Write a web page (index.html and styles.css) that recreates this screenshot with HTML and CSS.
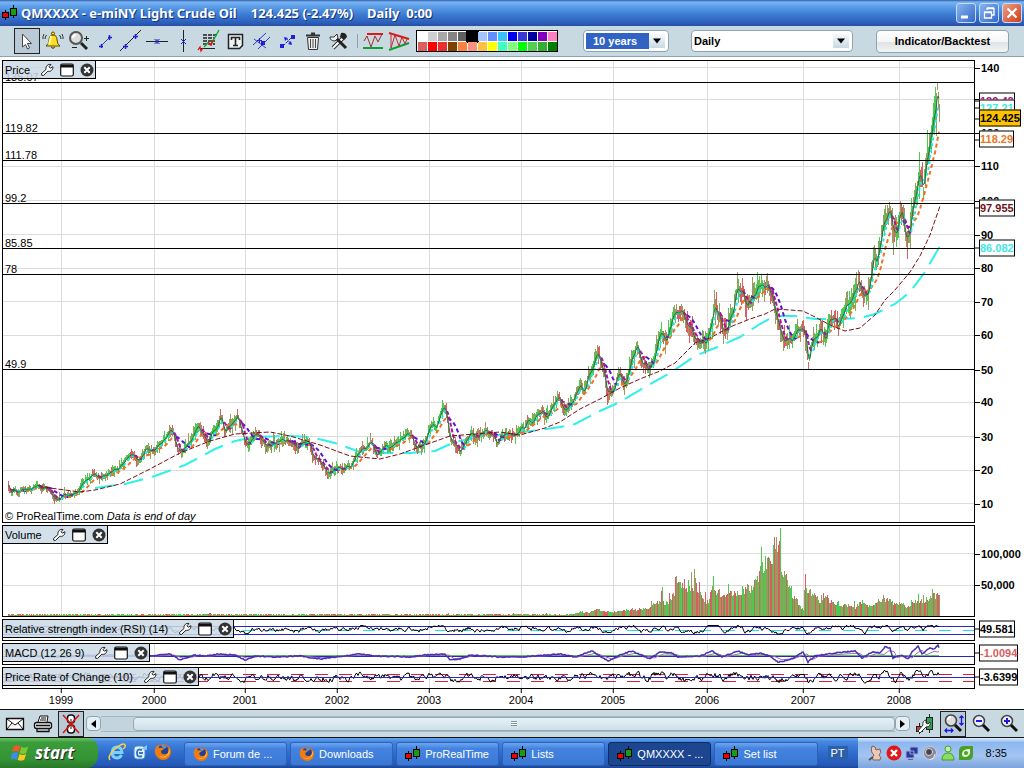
FILE: index.html
```html
<!DOCTYPE html>
<html lang="en">
<head>
<meta charset="utf-8">
<title>QMXXXX - e-miNY Light Crude Oil</title>
<link rel="stylesheet" href="styles.css">
</head>
<body>
<svg class="defs" aria-hidden="true">
  <symbol id="candles" viewBox="0 0 16 16"><path d="M3.500 5v10M11.500 0v13" stroke="#000"/><rect x=".5" y="7.500" width="6" height="5" fill="#f00000" stroke="#000"/><rect x="8.500" y="3.500" width="6" height="7" fill="#10a010" stroke="#000"/></symbol>
  <symbol id="wrench" viewBox="0 0 14 14"><path d="M1.500 10.500 6 6.500C5.500 3 8 .8 11 1.500L9 3.800l1.400 1.400 2.500-1.500C13.200 7 10.500 9 7.800 8.200L3.500 12.500Q1 13 1.500 10.500Z" fill="#fff" stroke="#222"/></symbol>
  <symbol id="panel" viewBox="0 0 14 14"><rect x=".7" y="1" width="12.600" height="12" rx="1.500" fill="#fff" stroke="#111" stroke-width="1.200"/><path d="M1 1.500h12v3H1z" fill="#111"/></symbol>
  <symbol id="close" viewBox="0 0 14 14"><circle cx="7" cy="7" r="6.500" fill="#333"/><path d="m4.300 4.300 5.400 5.400m0-5.400L4.300 9.700" stroke="#fff" stroke-width="2"/></symbol>
  <symbol id="firefox" viewBox="0 0 18 18"><circle cx="9" cy="9" r="8" fill="#e66a10"/><circle cx="9" cy="7.500" r="5.500" fill="#24418f"/><path d="M7 2q4-1 6 2l-3 2-2-2Z" fill="#5c92d8"/><path d="M1 6q1-3 3-4l1 3q3-1 5 1L7 8q0 4 5 3 4-1 3-7 3 5 0 10-5 5-11 0Q0 11 1 6Z" fill="#ee7c16"/><path d="M15 5q2 5-2 8-4 3-8 0 5 2 8-1 2-3 2-7Z" fill="#ffc540"/></symbol>
</svg>

<header class="titlebar">
  <svg class="i16"><use href="#candles"/></svg>
  <h1><span>QMXXXX - e-miNY Light Crude Oil</span><span>124.425 (-2.47%)</span><span>Daily&nbsp; 0:00</span></h1>
  <div class="window-buttons">
    <button aria-label="Minimize"><svg viewBox="0 0 18 18"><path d="M4 13h7" stroke="#fff" stroke-width="3"/></svg></button>
    <button aria-label="Restore"><svg viewBox="0 0 18 18"><path d="M7 6V4.500h7V11h-2M7 4h7M4.500 8h7v6h-7zM4 8.500h8" fill="none" stroke="#fff" stroke-width="1.300"/></svg></button>
    <button class="quit" aria-label="Close"><svg viewBox="0 0 18 18"><path d="m4.500 4.500 9 9m0-9-9 9" stroke="#fff" stroke-width="2.300"/></svg></button>
  </div>
</header>

<nav class="toolbar" aria-label="Drawing tools">
  <div class="tools">
    <button class="tool pressed" aria-label="Pointer"><svg viewBox="0 0 24 24"><path d="M7.500 5v13l3-2.500 2 4.500 2-1-2-4.500h4Z" fill="#fff" stroke="#444"/></svg></button>
    <button class="tool" aria-label="Alerts"><svg viewBox="0 0 24 24"><path d="M5 17q3-2 3-6 0-5 4-5t4 5q0 4 3 6Z" fill="#ffdf20" stroke="#5a4a00"/><path d="M10 7q-1 5-2 8" stroke="#fff9b0" stroke-width="2" fill="none"/><circle cx="12" cy="4.500" r="1.500" fill="#ffdf20" stroke="#5a4a00"/><path d="M10 18q2 3 4 0" fill="#e8a000" stroke="#5a4a00"/><path d="M5.500 6Q4 8 4 10M3 5Q1.500 8 2 10M18.500 6q1.500 2 1.500 4m1-5q1.500 3 1 5" fill="none" stroke="#333"/></svg></button>
    <button class="tool" aria-label="Zoom"><svg viewBox="0 0 24 24"><circle cx="9" cy="9" r="6" fill="#ddd" stroke="#555" stroke-width="2"/><path d="M6 9q0-3 3-3" fill="none" stroke="#fff" stroke-width="2"/><path d="m14 14 6 6" stroke="#222" stroke-width="3"/><path d="M17 9.500h5M19.500 7v5M5 18.500h5" stroke="#222"/></svg></button>
    <button class="tool" aria-label="Segment"><svg viewBox="0 0 24 24"><path d="m8 17 9-9" stroke="#447"/><path d="M6 17.500h4M8.500 15v4M15 8.500h4M16.500 6v5" stroke="#2020d8" stroke-width="1.500"/></svg></button>
    <button class="tool" aria-label="Line"><svg viewBox="0 0 24 24"><path d="M1 22 22 1" stroke="#222"/><path d="M4 17.500h5M6.500 15v5M14 7.500h5M16.500 5v5" stroke="#2020d8" stroke-width="1.500"/></svg></button>
    <button class="tool" aria-label="Horizontal line"><svg viewBox="0 0 24 24"><path d="M1 12.500h22" stroke="#222"/><path d="m9.500 10 5 5m0-5-5 5M12 10v5" stroke="#2020d8"/></svg></button>
    <button class="tool" aria-label="Vertical line"><svg viewBox="0 0 24 24"><path d="M12.500 1v22" stroke="#222"/><path d="m10 10 5 5m0-5-5 5" stroke="#2020d8"/></svg></button>
    <button class="tool" aria-label="Fibonacci"><svg viewBox="0 0 24 24"><path d="M6 6h14M6 9h12M6 12h12M6 15h12" stroke="#222" stroke-width="1.300" stroke-dasharray="4 1"/><path d="M4 19.500h14" stroke="#222"/><path d="m7 18 4-4 3 2 3-6 5-9" fill="none" stroke="#10b030" stroke-width="1.500"/><path d="m11 13 3 3 2-5M1 21l2-3 1 4 2-3" fill="none" stroke="#e01010" stroke-width="1.300"/></svg></button>
    <button class="tool" aria-label="Text"><svg viewBox="0 0 24 24"><path d="M5.500 5.500h14v11l-3 3h-11Z" fill="#eef2f4" stroke="#222" stroke-width="1.500"/><path d="M8.500 11V8.500h8V11M12.500 8.500v8M10 16.500h5" fill="none" stroke="#222" stroke-width="1.600"/></svg></button>
    <button class="tool" aria-label="Channel"><svg viewBox="0 0 24 24"><path d="M4 16 17 4M9 20 21 8M5 10l12 9" stroke="#3838c8"/><path d="M8 11.500h5M10.500 9v5" stroke="#2020d8"/><path d="M12 12h4v4h-4z" fill="#2020d8"/></svg></button>
    <button class="tool" aria-label="Move"><svg viewBox="0 0 24 24"><path d="m8 17 9-9M11 9l5 6" stroke="#2020d8" stroke-dasharray="3 1"/><path d="M5 15h4v4H5zM16 6h4v4h-4zM9 8l4 1-3 3ZM17 16l-4-1 3-3Z" fill="#2020d8"/></svg></button>
    <button class="tool" aria-label="Delete"><svg viewBox="0 0 24 24"><path d="M6.500 8.500 7.500 20.500h9l1-12Z" fill="#eee" stroke="#333"/><path d="M5 6.500h14M10 4.500h4" stroke="#333" stroke-width="1.800"/><path d="M9.500 10v9M12 10v9M14.500 10v9" stroke="#444"/></svg></button>
    <button class="tool" aria-label="Settings"><svg viewBox="0 0 24 24"><path d="m6 19 11-11" stroke="#333" stroke-width="4"/><path d="m6 19 11-11" stroke="#fff" stroke-width="2"/><path d="M14 4q5-1 6 4l-3 3-4-3Z" fill="#222"/><path d="m10 10 9 9" stroke="#222" stroke-width="3"/><path d="M3 8q0 4 5 4l3-3-1-4-3 3Z" fill="#eee" stroke="#333"/></svg></button>
  </div>
  <div class="tools patterns">
    <button class="tool" aria-label="Range pattern"><svg viewBox="0 0 24 24"><path d="M6 5h16" stroke="#e01818" stroke-width="2"/><path d="M2 19h20" stroke="#10a030" stroke-width="2"/><path d="m3 12 3-5 4 11 4-11 3 6 4-8" fill="none" stroke="#a03030"/></svg></button>
    <button class="tool" aria-label="Triangle pattern"><svg viewBox="0 0 24 24"><path d="m2 4 20 6" stroke="#e01818" stroke-width="2"/><path d="m2 21 20-7" stroke="#10a030" stroke-width="2"/><path d="M4 5v14l4-13 4 11 3-9 3 7 2-5" fill="none" stroke="#c03030"/></svg></button>
  </div>
  <div class="palette" id="palette"></div>
  <label class="picker period"><select aria-label="Period"><option>10 years</option></select><svg viewBox="0 0 8 5"><path d="M0 0h8L4 5Z"/></svg></label>
  <label class="picker interval"><select aria-label="Interval"><option>Daily</option></select><svg viewBox="0 0 8 5"><path d="M0 0h8L4 5Z"/></svg></label>
  <button class="backtest">Indicator/Backtest</button>
</nav>

<main class="charts">
  <section class="row price">
    <div class="plot"><svg class="graph" id="g-price" viewBox="3 61 971 461" preserveAspectRatio="none"></svg>
      <div class="levels" id="levels"></div>
      <div class="head"><h2>Price</h2><button aria-label="Configure price"><svg><use href="#wrench"/></svg></button><button aria-label="Price window"><svg><use href="#panel"/></svg></button><button aria-label="Close price"><svg><use href="#close"/></svg></button></div>
      <p class="credit">© ProRealTime.com <em>Data is end of day</em></p>
    </div>
    <div class="axis" id="a-price"></div>
  </section>
  <section class="row volume">
    <div class="plot"><svg class="graph" id="g-volume" viewBox="3 526 971 90" preserveAspectRatio="none"></svg>
      <div class="head"><h2>Volume</h2><button aria-label="Configure volume"><svg><use href="#wrench"/></svg></button><button aria-label="Volume window"><svg><use href="#panel"/></svg></button><button aria-label="Close volume"><svg><use href="#close"/></svg></button></div>
    </div>
    <div class="axis" id="a-volume"></div>
  </section>
  <section class="row thin">
    <div class="plot"><svg class="graph" id="g-rsi" viewBox="3 620 971 20" preserveAspectRatio="none"></svg>
      <div class="head"><h2>Relative strength index (RSI) (14)</h2><button aria-label="Configure RSI"><svg><use href="#wrench"/></svg></button><button aria-label="RSI window"><svg><use href="#panel"/></svg></button><button aria-label="Close RSI"><svg><use href="#close"/></svg></button></div>
    </div>
    <div class="axis" id="a-rsi"></div>
  </section>
  <section class="row thin">
    <div class="plot"><svg class="graph" id="g-macd" viewBox="3 644 971 20" preserveAspectRatio="none"></svg>
      <div class="head"><h2>MACD (12 26 9)</h2><button aria-label="Configure MACD"><svg><use href="#wrench"/></svg></button><button aria-label="MACD window"><svg><use href="#panel"/></svg></button><button aria-label="Close MACD"><svg><use href="#close"/></svg></button></div>
    </div>
    <div class="axis" id="a-macd"></div>
  </section>
  <section class="row thin">
    <div class="plot"><svg class="graph" id="g-roc" viewBox="3 668 971 20" preserveAspectRatio="none"></svg>
      <div class="head"><h2>Price Rate of Change (10)</h2><button aria-label="Configure rate of change"><svg><use href="#wrench"/></svg></button><button aria-label="Rate of change window"><svg><use href="#panel"/></svg></button><button aria-label="Close rate of change"><svg><use href="#close"/></svg></button></div>
    </div>
    <div class="axis" id="a-roc"></div>
  </section>
  <div class="years" id="years"></div>
</main>

<div class="scrollrow">
  <button class="tool" aria-label="Mail"><svg viewBox="0 0 24 24"><path d="M3.500 6.500h17v11h-17z" fill="#fff" stroke="#111" stroke-width="1.300"/><path d="m4 7 8 6 8-6M4 17l5-6M20 17l-5-6" fill="none" stroke="#111"/></svg></button>
  <button class="tool" aria-label="Print"><svg viewBox="0 0 24 24"><path d="m7 10 2-6h8l-1 6" fill="#fff" stroke="#111"/><path d="M10 6h5M9 8h6" stroke="#111"/><rect x="3.500" y="10.500" width="17" height="6" rx="2" fill="#e8e8e8" stroke="#111" stroke-width="1.300"/><path d="M5 13.500h14M6 16v3.500h12V16" fill="none" stroke="#111" stroke-width="1.300"/></svg></button>
  <button class="tool pressed" aria-label="Unlink"><svg viewBox="0 0 24 24"><rect x="8.500" y="3" width="7" height="8" rx="3" fill="#fff" stroke="#111" stroke-width="1.500"/><rect x="8.500" y="13" width="7" height="8" rx="3" fill="#fff" stroke="#111" stroke-width="1.500"/><path d="M12 7v10" stroke="#111"/><path d="m4 3 16 18M20 3 4 21" stroke="#e01010" stroke-width="1.500"/></svg></button>
  <div class="scrollbar">
    <button aria-label="Scroll left"><svg viewBox="0 0 5 8"><path d="M5 0v8L0 4Z"/></svg></button>
    <div class="track"><div class="thumb"><i></i></div></div>
    <button aria-label="Scroll right"><svg viewBox="0 0 5 8"><path d="M0 0v8l5-4Z"/></svg></button>
  </div>
  <button class="tool" aria-label="Chart style"><svg viewBox="0 0 24 24"><path d="M6.500 11v11M16.500 2v19" stroke="#222"/><rect x="3.500" y="14.500" width="6" height="5" fill="#d04040" stroke="#222"/><rect x="13.500" y="5.500" width="6" height="12" fill="#30a050" stroke="#222"/><path d="m5 19 5-6q-1-4 3-5v3l2 1 2-2q1 5-4 5l-6 6Z" fill="#fff" stroke="#333"/></svg></button>
  <button class="tool pressed" aria-label="Fit"><svg viewBox="0 0 24 24"><circle cx="10" cy="8.500" r="5.500" fill="#ddd" stroke="#444" stroke-width="1.600"/><path d="M7 8q0-3 3-3" fill="none" stroke="#fff" stroke-width="2"/><path d="m14 13 6 6" stroke="#111" stroke-width="3"/><path d="M20.500 4v9M18.500 6l2-2 2 2M18.500 11l2 2 2-2M4 18.500h8M6 16.500l-2 2 2 2M10 16.500l2 2-2 2" fill="none" stroke="#1818e0" stroke-width="1.300"/></svg></button>
  <button class="tool" aria-label="Zoom out"><svg viewBox="0 0 24 24"><circle cx="10" cy="9" r="5.500" fill="#eef" stroke="#444" stroke-width="1.500"/><path d="m14 13 6 6" stroke="#111" stroke-width="3"/><path d="M7 9h6" stroke="#1818e0" stroke-width="2"/></svg></button>
  <button class="tool" aria-label="Zoom in"><svg viewBox="0 0 24 24"><circle cx="10" cy="9" r="5.500" fill="#eef" stroke="#444" stroke-width="1.500"/><path d="m14 13 6 6" stroke="#111" stroke-width="3"/><path d="M7 9h6M10 6v6" stroke="#1818e0" stroke-width="2"/></svg></button>
</div>

<footer class="taskbar">
  <button class="start"><svg viewBox="0 0 20 18"><path d="M3 2q4-2 7 0L8 8Q5 6 1 8Z" fill="#f05a28"/><path d="M11 2.500q3 2 7 0L16 9q-4 2-7 0Z" fill="#7cc832"/><path d="M1 9.500q4-2 7 0L6 16q-3-2-7 0Z" fill="#3c8cf0"/><path d="M9 10q3 2 7 0l-2 6q-4 2-7 0Z" fill="#fcc820"/></svg>start</button>
  <div class="quick">
    <button aria-label="Internet Explorer"><svg viewBox="0 0 18 18"><path d="M13.500 12q-1.500 3-4.500 3-4.500 0-5-5.500Q4.500 4 9 4t5 5.500H5" fill="none" stroke="#7cd0ff" stroke-width="2.800"/><path d="M2 17Q-1 13 7 6t10-4q1 2-2 4" fill="none" stroke="#ffce40" stroke-width="1.500"/></svg></button>
    <button aria-label="Outlook"><svg viewBox="0 0 18 18"><rect x="3" y="3" width="11" height="13" rx="3" fill="#e8f4ff" stroke="#4888c8"/><path d="M11 7q-5-2-5 3t5 3M8 10h4" fill="none" stroke="#2878d0" stroke-width="2"/><path d="m10 6 6-4v5Z" fill="#80c8f8"/></svg></button>
    <button aria-label="Firefox"><svg><use href="#firefox"/></svg></button>
  </div>
  <div class="tasks">
    <button><svg><use href="#firefox"/></svg>Forum de ...</button>
    <button><svg><use href="#firefox"/></svg>Downloads</button>
    <button><svg><use href="#candles"/></svg>ProRealTime</button>
    <button><svg><use href="#candles"/></svg>Lists</button>
    <button class="active"><svg><use href="#candles"/></svg>QMXXXX - ...</button>
    <button><svg><use href="#candles"/></svg>Set list</button>
  </div>
  <span class="lang">PT</span>
  <div class="tray">
    <svg viewBox="0 0 16 16"><path d="M4 1q4 0 4 4l4-1q2 4-1 6 3 2 1 5H5q-2-3 1-5-4-3-2-9Z" fill="#e8c8b8" stroke="#806050"/><path d="m1 15 4-3" stroke="#555" stroke-width="2"/></svg>
    <svg viewBox="0 0 16 16"><circle cx="8" cy="8" r="7.500" fill="#e01818"/><path d="m5 5 6 6m0-6-6 6" stroke="#fff" stroke-width="2.400"/></svg>
    <svg viewBox="0 0 16 16"><path d="M6 2h8v7H6zM2 6h8v7H2z" fill="#2838a0" stroke="#99a8d0"/><path d="M4 14.500h5" stroke="#667"/></svg>
    <svg viewBox="0 0 16 16"><circle cx="8" cy="8" r="6.500" fill="#889" stroke="#ccd"/><circle cx="7" cy="7" r="3.500" fill="#445" stroke="#ddd"/><path d="M13 9q0 4-5 6" stroke="#eee" fill="none"/></svg>
    <svg viewBox="0 0 16 16"><circle cx="8" cy="4" r="3" fill="#c8f0a0" stroke="#40a030"/><path d="M2 15q0-7 6-7t6 7Z" fill="#8cdc60" stroke="#40a030"/></svg>
    <svg viewBox="0 0 16 16"><path d="M6 1h9v9q0 5-5 5H1V6q0-5 5-5Z" fill="#48a028"/><path d="M12 4q1 8-5 8-3 0-3-3 0-5 8-5Z" fill="#e8f8d0"/><circle cx="8" cy="8" r="2" fill="#48a028"/></svg>
    <time>8:35</time>
  </div>
</footer>
<script src="chart.js"></script>
</body>
</html>
```

FILE: styles.css
```css
* { box-sizing: border-box; }
body {
  margin: 0; min-height: 100vh; display: flex; flex-direction: column;
  font: 11px/14px "Liberation Sans", Arial, sans-serif; color: #000; background: #fff;
}
button, select { font: inherit; color: inherit; padding: 0; margin: 0; border: 0; background: none; }
h1, h2, p { margin: 0; font: inherit; }
svg { display: block; }
.defs { position: absolute; width: 0; height: 0; }
.i16 { width: 16px; height: 16px; }

.titlebar {
  display: flex; align-items: center; height: 26px; padding: 0 2px; gap: 3px; color: #fff;
  background: linear-gradient(#3060b0 0, #7ab4f2 8%, #5c9ee8 25%, #3c7cd2 55%, #2c5cb8 90%, #2450a0);
}
.titlebar h1 {
  flex: 1; display: flex; gap: 14px; white-space: nowrap;
  font: bold 13px/18px "Noto Sans", "Open Sans", sans-serif; text-shadow: 1px 1px #14357c;
}
.window-buttons { display: flex; gap: 3px; }
.window-buttons button {
  width: 20px; height: 20px; border: 1px solid #c4dcfa; border-radius: 3px;
  background: linear-gradient(135deg, #88b4f0, #3468c8);
}
.window-buttons .quit { background: linear-gradient(135deg, #f0a088, #cc3c18); }

.toolbar {
  display: flex; align-items: center; height: 31px; padding-left: 14px;
  background: #c8d9e2; border-bottom: 1px solid #8fa3ad;
}
.tools { display: flex; }
.tool { display: grid; place-items: center; width: 26px; height: 26px; flex: none; }
.tool svg { width: 24px; height: 24px; }
.tool.pressed { border: 1px solid #222; background: #b9cad6; }
.patterns { margin-left: 5px; padding-left: 3px; background: linear-gradient(#8fa3ad, #8fa3ad) 0 6px / 1px 14px no-repeat; }
.palette {
  display: grid; grid-template-columns: repeat(14, 10px); grid-auto-rows: 10px;
  margin-left: 4px; border: 1px solid #000; background: #fff;
}
.palette button { width: 9px; height: 9px; margin: 1px 0 0 1px; }
.palette button.chosen { width: 13px; height: 12px; margin: 0 0 0 -1px; }
.picker {
  position: relative; display: block; height: 22px; padding: 2px; background: #fff;
  border: 1px solid #8da4b4; border-radius: 4px;
}
.picker select {
  display: block; width: 100%; height: 16px; font-weight: bold; appearance: none; outline: 0; padding-left: 7px;
}
.picker svg {
  position: absolute; right: 3px; top: 3px; width: 16px; height: 14px; padding: 4px;
  background: linear-gradient(#f6fafc, #c8d9e2); pointer-events: none;
}
.period { width: 86px; margin-left: 25px; }
.period select { color: #fff; background: linear-gradient(#3163c5, #3163c5) 0 0 / 63px 100% no-repeat; }
.period option { color: #000; }
.interval { flex: 0 0 162px; margin-left: 22px; }
.interval select { padding-left: 0; }
.backtest {
  width: 133px; height: 23px; margin: 0 15px 0 auto; font-weight: bold;
  border: 1px solid #8da4b4; border-radius: 4px;
  background: linear-gradient(#fff, #f6f6f6 50%, #dfe3e5 55%, #f4f4f4);
}

.charts { flex: 1; display: flex; flex-direction: column; gap: 2px; padding: 3px 0 0 2px; }
.row { display: grid; grid-template-columns: 1fr 49px; }
.price { flex: 463 0 0; min-height: 300px; }
.volume { flex: 92 0 0; min-height: 60px; }
.thin { height: 22px; }
.plot { position: relative; border: 1px solid #000; min-width: 0; }
.graph { position: absolute; width: 100%; height: 100%; }
.graph * { vector-effect: non-scaling-stroke; fill: none; }
.grid { stroke: #dcdcdc; shape-rendering: crispEdges; }
.level { stroke: #000; shape-rendering: crispEdges; }
.bar { shape-rendering: crispEdges; }
.green { stroke: #4fc94f; }
.red { stroke: #d66060; }
.olive { stroke: #9c9860; }
.close-line { stroke: #187848; }
.fast-up { stroke: #20e8e0; stroke-width: 2; stroke-dasharray: 3 3; }
.fast-down { stroke: #b0109c; stroke-width: 2; stroke-dasharray: 4 2; }
.mid-up { stroke: #ee7020; stroke-width: 2; stroke-dasharray: 4 3; }
.mid-down { stroke: #5a10d0; stroke-width: 2; stroke-dasharray: 4 3; }
.slow { stroke: #781018; stroke-width: 1; stroke-dasharray: 5 2; }
.long { stroke: #30f0ea; stroke-width: 2; stroke-dasharray: 20 9; }
.ink { stroke: #000; }
.blue { stroke: #2828c0; shape-rendering: crispEdges; }
.cyan-dash { stroke: #20e0e8; stroke-dasharray: 12 12; shape-rendering: crispEdges; }
.red-dash { stroke: #d02040; stroke-dasharray: 13 11; shape-rendering: crispEdges; }
.macd { stroke: #4a30b0; stroke-width: 1.5; }
.signal { stroke: #a868b8; }
.histogram { stroke: #60c860; }

.head {
  position: relative; display: inline-flex; align-items: center; gap: 6px; height: 18px; padding: 0 1px 0 2px;
  border: solid #000; border-width: 0 1px 1px 0; background: rgba(203, 219, 229, .85); vertical-align: top;
}
.head h2 { margin-right: 4px; white-space: nowrap; }
.head button, .head svg { width: 14px; height: 14px; }
.levels span { position: absolute; left: 2px; line-height: 10px; transform: translateY(-100%); }
.credit { position: absolute; left: 2px; bottom: -1px; }

.axis { position: relative; font-weight: bold; }
.axis span { position: absolute; left: 6px; transform: translateY(-50%); }
.axis span::before { content: ""; position: absolute; left: -6px; top: 50%; width: 5px; height: 1px; background: #000; }
.axis .tag { left: 4px; padding: 0; line-height: 15px; border: 1px solid #000; background: #fff; }
.axis .tag::before { left: -5px; width: 4px; }
.axis .last { background: #fec200; }
.c-magenta { color: #b0107c; }
.c-cyan { color: #40e8e4; }
.c-orange { color: #e87828; }
.c-maroon { color: #701018; }
.c-rose { color: #d66060; }

.years { position: relative; height: 18px; margin-right: 50px; }
.years span { position: absolute; top: 3px; transform: translateX(-50%); line-height: 12px; }
.years span::before { content: ""; position: absolute; left: 50%; top: -5px; width: 1px; height: 4px; background: #000; }

.scrollrow {
  display: flex; align-items: center; height: 29px; padding: 0 2px;
  background: #c8d9e2; border: solid #111; border-width: 1px 0; gap: 2px;
}
.scrollbar { flex: 1; display: flex; align-items: center; }
.scrollbar button {
  display: grid; place-items: center; width: 15px; height: 15px; border: 1px solid #8da4b4; border-radius: 4px;
  background: #e4eef3;
}
.scrollbar button svg { width: 5px; height: 8px; }
.track { flex: 1; height: 16px; padding-left: 32px; border: solid #a4b8c2; border-width: 1px 0; background: #c3d4de; }
.thumb {
  display: grid; place-items: center; height: 14px; border: 1px solid #94a9b5; border-radius: 4px;
  background: linear-gradient(#e6f1f6, #cddfe9);
}
.thumb i { width: 6px; height: 5px; background: repeating-linear-gradient(#8094a4 0 1px, #fff 1px 2px); }

.taskbar {
  display: flex; height: 30px; color: #fff;
  background: linear-gradient(#6aa6ee 0, #4486e0 12%, #2f6ccc 50%, #2458b8 90%, #1c4490);
}
.start {
  display: flex; align-items: center; gap: 5px; width: 98px; padding-left: 11px; color: #fff;
  font: italic bold 17px/20px "Open Sans", sans-serif; text-shadow: 1px 1px 1px #222;
  border-radius: 0 10px 12px 0; background: linear-gradient(#6cc468 0, #3c9c3c 15%, #349434 70%, #287828);
}
.start svg { width: 19px; height: 18px; }
.quick { display: flex; align-items: center; gap: 5px; padding: 0 12px 2px 10px; }
.quick svg { width: 18px; height: 18px; }
.tasks { flex: 1; display: grid; grid-template-columns: repeat(6, minmax(0, 1fr)); gap: 3px; padding: 4px 0 2px; }
.tasks button {
  display: flex; align-items: center; gap: 4px; padding-left: 8px; white-space: nowrap; overflow: hidden;
  border: 1px solid #2c62b8; border-radius: 3px; background: linear-gradient(#6ea6f0, #4484e0 25%, #3a78d4);
}
.tasks button svg { width: 16px; height: 16px; }
.tasks .active { background: #1c4690; border-color: #102c60; }
.lang { align-self: center; margin: 0 10px; padding: 0 3px; background: #2c60ac; }
.tray {
  display: flex; align-items: center; gap: 2px; padding: 0 17px 0 10px;
  background: linear-gradient(#e0ecfc 0, #8cb8f0 15%, #a4c4f0 60%, #7ca4dc); color: #000;
}
.tray svg { width: 16px; height: 16px; }
.tray time { margin-left: 10px; }
```

FILE: chart.js
```js
const X0 = 8, X1 = 939;
let seed = 4711;
const rnd = () => (seed = (seed * 16807) % 2147483647) / 2147483647;
const parse = s => s.trim().split(/\s+/).map(p => p.split(",").map(Number));

const price = parse(`8,487 11,494 13,490 18,489 27,490 31,489 37,484 40,487 45,488 49,490 53,497 58,499 62,496
66,495 72,497 78,492 83,482 88,478 93,474 97,479 102,478 108,474 113,472 119,468 125,461 130,455 134,458 138,462
142,455 146,448 151,450 156,448 160,441 165,436 170,428 173,433 175,441 178,451 183,450 187,444 192,440 197,428
201,432 205,439 208,442 212,432 217,426 220,416 224,430 228,426 232,423 237,416 241,430 245,446 249,442 255,434
260,440 266,444 270,445 275,442 281,440 287,441 292,444 296,447 301,446 306,444 310,445 313,458 317,460 322,465
327,473 332,473 337,468 343,470 347,467 352,463 356,455 361,448 366,450 371,441 377,453 382,448 390,447 396,440
401,438 407,434 411,437 417,450 422,445 427,438 430,427 436,424 441,414 444,407 446,411 448,428 451,440 455,442
460,451 464,444 470,435 476,435 481,433 486,432 491,434 497,444 501,436 508,434 514,436 520,431 526,424 533,421
538,414 545,415 551,409 557,398 560,402 565,410 570,402 575,393 580,382 584,390 589,375 593,363 597,351 601,366
604,377 607,393 611,395 615,387 619,373 624,382 628,370 633,351 638,347 641,361 645,366 649,372 654,357 658,340
662,333 667,338 671,322 676,304 680,313 685,318 690,327 694,336 699,343 703,336 706,341 710,325 714,306 719,318
723,330 728,328 733,312 737,288 742,293 746,301 751,299 757,288 761,282 766,281 770,292 774,305 777,323 780,333
786,337 793,337 798,327 803,328 806,340 808,364 812,345 817,334 821,330 825,339 829,320 834,319 838,325 844,315
849,303 853,292 858,277 862,287 866,295 871,275 874,261 877,264 881,240 884,220 886,214 889,213 893,230 896,232
900,208 903,221 906,234 909,235 911,220 914,203 917,181 919,165 921,178 923,192 926,162 929,143 931,140 933,125
935,115 937,88 938,98 940,110`);
const slow = parse(`38,485 50,488 65,490 80,492 95,490 120,484 150,469 180,453 210,441 235,434 270,432 290,436 320,445
350,456 380,459 400,454 425,445 450,436 475,434 500,432 520,435 545,428 560,422 580,409 600,399 620,388 640,379
660,371 675,363 695,343 710,338 730,327 750,319 765,314 775,309 790,310 803,311 815,317 830,325 845,331 860,328
875,315 885,300 895,290 910,272 920,256 930,235 940,206`);
const long = parse(`95,488 125,484 155,476 185,465 215,449 235,441 255,437 290,436 310,437 335,443 360,452 385,453
410,453 435,451 455,442 480,437 505,434 540,430 560,427 575,424 600,411 620,402 645,387 670,373 695,356 720,346
740,337 760,324 775,316 795,316 815,319 840,319 860,318 875,314 895,304 910,292 925,272 940,246`);
const volume = parse(`8,1 560,1 570,2 580,4 590,4 597,8 605,5 612,4 628,6 645,8 655,14 660,16 661,27 664,13 667,14
674,24 675,38 683,34 692,30 695,36 702,20 708,14 712,28 716,26 725,22 740,27 752,30 757,40 765,58 770,55 774,74
778,76 779,74 780,88 781,48 788,35 794,19 803,6 804,31 812,23 820,16 826,20 835,12 845,12 855,10 862,15 870,10
876,14 884,20 890,16 898,12 901,18 906,9 915,15 925,17 935,22 940,28`);
const macd = parse(`8,656 60,657 100,655 150,656 170,654 180,660 195,655 205,656 218,654 235,655 245,660 255,656
275,657 300,656 320,659 358,654 375,656 410,657 425,655 445,654 450,660 460,659 470,655 500,657 520,657 560,654
575,657 592,651 600,656 608,661 620,655 632,651 650,659 660,652 672,653 678,657 700,656 712,651 722,657 738,651
748,655 760,653 770,656 778,662 790,660 803,652 808,662 815,656 835,653 855,651 862,658 872,652 880,653 885,647
890,648 893,658 902,655 908,659 912,652 918,646 922,654 930,648 934,649 938,645 940,650`);

function at(points, x) {
  let i = 1;
  while (i < points.length - 1 && points[i][0] < x) i++;
  const [xa, ya] = points[i - 1], [xb, yb] = points[i];
  return ya + (yb - ya) * Math.min(1, Math.max(0, (x - xa) / (xb - xa)));
}
const ns = "http://www.w3.org/2000/svg";
function path(id, cls, d) {
  const p = document.createElementNS(ns, "path");
  p.setAttribute("class", cls);
  p.setAttribute("d", d);
  document.getElementById(id).append(p);
}
const line = pts => "M" + pts.map(p => p[0] + " " + p[1].toFixed(1)).join("L");
const hline = y => `M3 ${y + .5}H974`;

const yearX = [61, 154, 245, 337, 429, 521, 613, 707, 803, 899];
const panels = { "g-price": [61, 522], "g-volume": [526, 616], "g-rsi": [620, 640], "g-macd": [644, 664], "g-roc": [668, 688] };
for (const [id, [a, b]] of Object.entries(panels))
  path(id, "grid", yearX.map(x => `M${x + .5} ${a}V${b}`).join(""));
const priceTicks = [[140, 67], [130, 99], [120, 133], [110, 166], [100, 200], [90, 234], [80, 268], [70, 301],
  [60, 335], [50, 369], [40, 402], [30, 436], [20, 470], [10, 503]];
path("g-price", "grid", priceTicks.map(t => hline(t[1])).join(""));
path("g-volume", "grid", hline(553) + hline(585));

/* Daily ranges, one bar to a column */
const close = [], bars = { green: "", red: "", olive: "" };
let drift = 0;
for (let x = X0; x <= X1; x++) {
  const base = at(price, x), size = 1.6 + (515 - base) * .018;
  drift = drift * .6 + (rnd() - .5) * size * 1.6;
  const y = base + drift;
  close.push([x, y]);
  const up = size * (.7 + rnd() * rnd() * 3), down = size * (.7 + rnd() * rnd() * 3);
  const slope = at(price, x + 2) - at(price, x - 2) + (rnd() - .5) * 6;
  const tone = rnd() < .38 ? "olive" : slope < 0 ? "green" : "red";
  bars[tone] += `M${x + .5} ${Math.max(82, y - up).toFixed(1)}V${(y + down).toFixed(1)}`;
}
const average = n => close.map((p, i) => {
  const part = close.slice(Math.max(0, i - n + 1), i + 1);
  return [p[0], part.reduce((s, q) => s + q[1], 0) / part.length];
});
function split(series, from, upClass, downClass) {
  let run = [series[from]], rising = null;
  const flush = () => { if (run.length > 2) path("g-price", rising ? upClass : downClass, line(run)); };
  for (let i = from + 1; i < series.length; i++) {
    const now = series[i][1] <= series[Math.max(0, i - 3)][1];
    if (rising !== null && now !== rising) { flush(); run = [series[i - 1]]; }
    rising = now;
    run.push(series[i]);
  }
  flush();
}
path("g-price", "long", line(long));
for (const tone in bars) path("g-price", "bar " + tone, bars[tone]);
split(average(16), 12, "mid-up", "mid-down");
split(average(7), 3, "fast-up", "fast-down");
path("g-price", "close-line", line(average(3)));
path("g-price", "slow", line(slow));
const levels = [["135.07", 82], ["119.82", 133], ["111.78", 160], ["99.2", 203], ["85.85", 248], ["78", 274], ["49.9", 369]];
path("g-price", "level", levels.map(l => hline(l[1])).join(""));

/* Volume columns */
const vol = { green: "", red: "", olive: "" };
for (let x = X0; x < X1 + 1; x++) {
  const v = at(volume, x), spike = rnd() < .1 ? 1.35 : 1;
  const h = x === 780 ? v : Math.min(79, Math.max(1, v * (.75 + rnd() * .35) * spike + (x < 560 ? rnd() * 1.4 : 0)));
  const r = rnd(), tone = x === 780 ? "green" : r < .34 ? "green" : r < .68 ? "red" : "olive";
  vol[tone] += `M${x + .5} 616V${(616 - h).toFixed(1)}`;
}
for (const tone in vol) path("g-volume", "bar " + tone, vol[tone]);

/* Oscillators */
path("g-rsi", "blue", hline(626) + hline(634));
path("g-rsi", "cyan-dash", hline(630));
path("g-roc", "red-dash", hline(674) + hline(681));
path("g-macd", "histogram", "M8 655.500H939");
path("g-macd", "blue", hline(656));
let a = 0, b = 0;
const rsi = [], roc = [], fast = [], signal = [];
for (let x = X0; x <= X1; x++) {
  const trend = (at(price, x) - at(price, x - 8)) * .1;
  a = a * .7 + (rnd() - .5) * 3.6;
  b = b * .6 + (rnd() - .5) * 5.5;
  rsi.push([x, 629.5 + Math.max(-4, Math.min(4.5, trend + a))]);
  roc.push([x, 677.5 + Math.max(-7, Math.min(8, trend + b))]);
  fast.push([x, at(macd, x) + (rnd() - .5)]);
  signal.push([x, at(macd, x - 4) * .6 + 656.5 * .4]);
}
path("g-rsi", "ink", line(rsi));
path("g-macd", "signal", line(signal));
path("g-macd", "macd", line(fast));
path("g-roc", "ink", line(roc));
path("g-roc", "blue", hline(677));

/* Labels */
function label(host, text, cls, prop, value) {
  const s = document.createElement("span");
  s.textContent = text;
  if (cls) s.className = cls;
  s.style[prop] = value.toFixed(2) + "%";
  document.getElementById(host).append(s);
}
const inPrice = y => (y - 60 + .5) / 463 * 100;
for (const [t, y] of levels) label("levels", t, "", "top", (y - 61) / 461 * 100);
for (const [t, y] of priceTicks) label("a-price", t, "", "top", inPrice(y));
for (const [t, y, c] of [["129.42", 100, "c-magenta"], ["127.21", 107, "c-cyan"], ["118.29", 139, "c-orange"],
  ["97.955", 207, "c-maroon"], ["86.082", 247, "c-cyan"], ["124.425", 118, "last"]])
  label("a-price", t, "tag " + c, "top", inPrice(y));
label("a-volume", "100,000", "", "top", 31);
label("a-volume", "50,000", "", "top", 65);
label("a-rsi", "49.581", "tag", "top", 45);
label("a-macd", "-1.0094", "tag c-rose", "top", 45);
label("a-roc", "-3.6399", "tag", "top", 45);
yearX.forEach((x, i) => label("years", 1999 + i, "", "left", (x - 2) / 972 * 100));

const colours = ["#ffffff", "#d0d0d0", "#a8a8a8", "#848484", "#606060", "#000000", "#a8c4ff", "#6090ff", "#38c0ff",
  "#0000f0", "#3838d8", "#0000a0", "#8000c0", "#ff80c0", "#d86060", "#ff0000", "#e83030", "#804000", "#ff8040",
  "#ff9080", "#ffc040", "#ffff00", "#40ffc0", "#80ff80", "#00ff00", "#50d050", "#30b030", "#008000"];
colours.forEach((c, i) => {
  const b = document.createElement("button");
  b.style.background = c;
  b.setAttribute("aria-label", "Colour " + c);
  if (i === 5) b.className = "chosen";
  document.getElementById("palette").append(b);
});
```
